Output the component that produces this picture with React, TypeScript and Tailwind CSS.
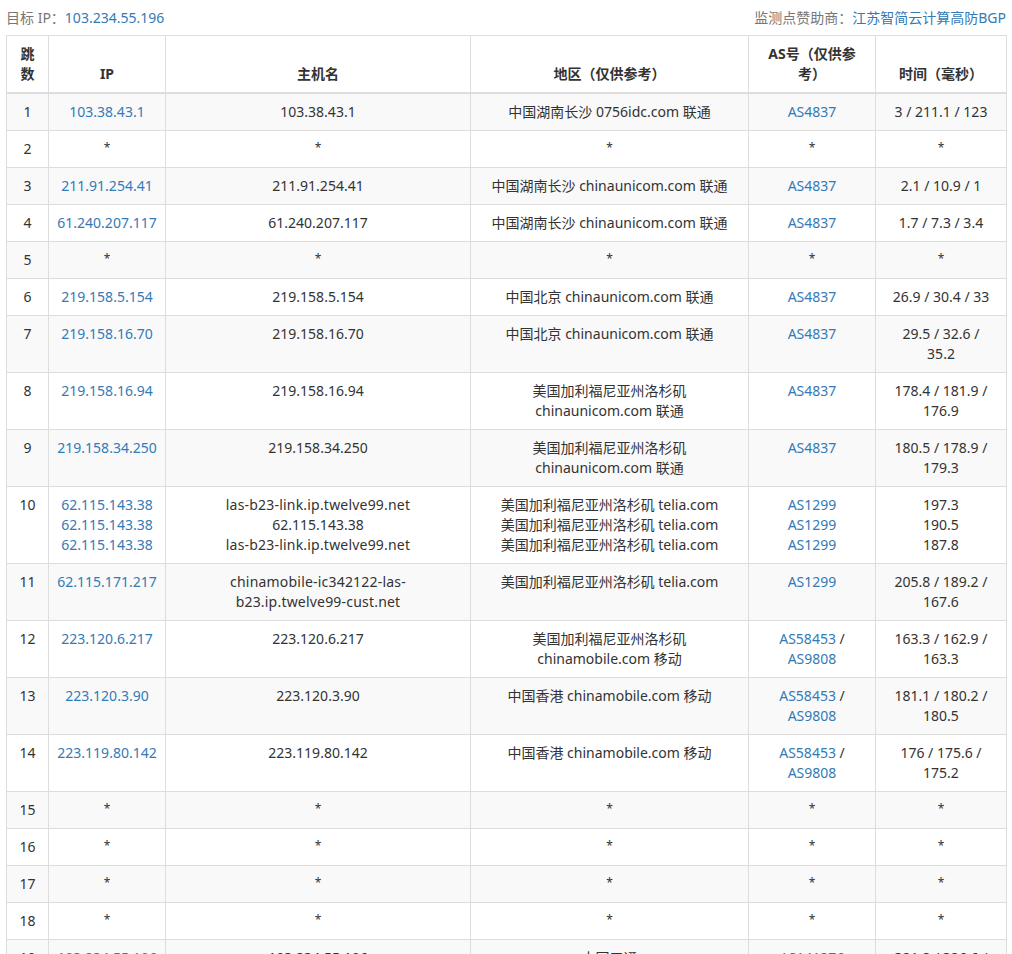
import React from "react";

type Hop = {
  n: number;
  ips: string[];
  hosts: string[];
  areas: string[];
  asLines: string[];
  times: string[];
};

const star = (n: number): Hop => ({ n, ips: ["*"], hosts: ["*"], areas: ["*"], asLines: ["*"], times: ["*"] });

const hops: Hop[] = [
  { n: 1, ips: ["103.38.43.1"], hosts: ["103.38.43.1"], areas: ["中国湖南长沙 0756idc.com 联通"], asLines: ["AS4837"], times: ["3 / 211.1 / 123"] },
  star(2),
  { n: 3, ips: ["211.91.254.41"], hosts: ["211.91.254.41"], areas: ["中国湖南长沙 chinaunicom.com 联通"], asLines: ["AS4837"], times: ["2.1 / 10.9 / 1"] },
  { n: 4, ips: ["61.240.207.117"], hosts: ["61.240.207.117"], areas: ["中国湖南长沙 chinaunicom.com 联通"], asLines: ["AS4837"], times: ["1.7 / 7.3 / 3.4"] },
  star(5),
  { n: 6, ips: ["219.158.5.154"], hosts: ["219.158.5.154"], areas: ["中国北京 chinaunicom.com 联通"], asLines: ["AS4837"], times: ["26.9 / 30.4 / 33"] },
  { n: 7, ips: ["219.158.16.70"], hosts: ["219.158.16.70"], areas: ["中国北京 chinaunicom.com 联通"], asLines: ["AS4837"], times: ["29.5 / 32.6 /", "35.2"] },
  { n: 8, ips: ["219.158.16.94"], hosts: ["219.158.16.94"], areas: ["美国加利福尼亚州洛杉矶", "chinaunicom.com 联通"], asLines: ["AS4837"], times: ["178.4 / 181.9 /", "176.9"] },
  { n: 9, ips: ["219.158.34.250"], hosts: ["219.158.34.250"], areas: ["美国加利福尼亚州洛杉矶", "chinaunicom.com 联通"], asLines: ["AS4837"], times: ["180.5 / 178.9 /", "179.3"] },
  {
    n: 10,
    ips: ["62.115.143.38", "62.115.143.38", "62.115.143.38"],
    hosts: ["las-b23-link.ip.twelve99.net", "62.115.143.38", "las-b23-link.ip.twelve99.net"],
    areas: ["美国加利福尼亚州洛杉矶 telia.com", "美国加利福尼亚州洛杉矶 telia.com", "美国加利福尼亚州洛杉矶 telia.com"],
    asLines: ["AS1299", "AS1299", "AS1299"],
    times: ["197.3", "190.5", "187.8"],
  },
  { n: 11, ips: ["62.115.171.217"], hosts: ["chinamobile-ic342122-las-", "b23.ip.twelve99-cust.net"], areas: ["美国加利福尼亚州洛杉矶 telia.com"], asLines: ["AS1299"], times: ["205.8 / 189.2 /", "167.6"] },
  { n: 12, ips: ["223.120.6.217"], hosts: ["223.120.6.217"], areas: ["美国加利福尼亚州洛杉矶", "chinamobile.com 移动"], asLines: ["AS58453 /", "AS9808"], times: ["163.3 / 162.9 /", "163.3"] },
  { n: 13, ips: ["223.120.3.90"], hosts: ["223.120.3.90"], areas: ["中国香港 chinamobile.com 移动"], asLines: ["AS58453 /", "AS9808"], times: ["181.1 / 180.2 /", "180.5"] },
  { n: 14, ips: ["223.119.80.142"], hosts: ["223.119.80.142"], areas: ["中国香港 chinamobile.com 移动"], asLines: ["AS58453 /", "AS9808"], times: ["176 / 175.6 /", "175.2"] },
  star(15),
  star(16),
  star(17),
  star(18),
  { n: 19, ips: ["103.234.55.196"], hosts: ["103.234.55.196"], areas: ["中国三通"], asLines: ["AS141376"], times: ["321.8 / 326.6 /", "322.1"] },
];

const thClass = "border border-[#dddddd] border-b-2 px-2 py-2 align-bottom text-center font-bold";
const tdClass = "border border-[#dddddd] px-2 py-2 align-top text-center";

// the * placeholder sits small and high in the reference
const Star = () => <div className="h-5 text-xs leading-[17px]">*</div>;

// "AS58453 /" keeps the slash outside the link
function AsLine({ text }: { text: string }) {
  if (text === "*") return <Star />;
  const [code, rest] = text.split(" ");
  return (
    <div>
      <a className="text-[#337ab7]">{code}</a>
      {rest ? ` ${rest}` : ""}
    </div>
  );
}

const Lines = ({ items, link, wide }: { items: string[]; link?: boolean; wide?: boolean }) => (
  <>
    {items.map((line, i) => {
      if (line === "*") return <Star key={i} />;
      if (link) {
        return (
          <div key={i}>
            <a className="text-[#337ab7]">{line}</a>
          </div>
        );
      }
      // host names with letters run a little wider than the digits do
      return (
        <div key={i} className={wide && /[a-z]/.test(line) ? "tracking-[0.2px]" : ""}>
          {line}
        </div>
      );
    })}
  </>
);

export default function App() {
  return (
    <div className="h-[954px] overflow-hidden bg-white px-1.5 font-['Noto_Sans','Noto_Sans_CJK_SC',sans-serif] text-[14px] leading-5 text-[#333333]">
      <div className="flex h-[35px] items-center justify-between text-[#777777]">
        <div>
          目标 IP：<a className="text-[#337ab7]">103.234.55.196</a>
        </div>
        <div>
          监测点赞助商：<a className="text-[#337ab7]">江苏智简云计算高防BGP</a>
        </div>
      </div>
      <table className="w-[1000px] table-fixed border-collapse">
        <colgroup>
          <col className="w-[42px]" />
          <col className="w-[117px]" />
          <col className="w-[305px]" />
          <col className="w-[278px]" />
          <col className="w-[127px]" />
          <col className="w-[131px]" />
        </colgroup>
        <thead>
          <tr>
            <th className={thClass}>跳数</th>
            <th className={thClass}>IP</th>
            <th className={thClass}>主机名</th>
            <th className={thClass}>地区（仅供参考）</th>
            <th className={thClass}>
              AS号（仅供参
              <br />
              考）
            </th>
            <th className={thClass}>时间（毫秒）</th>
          </tr>
        </thead>
        <tbody>
          {hops.map((hop) => (
            <tr key={hop.n} className="odd:bg-[#f9f9f9]">
              <td className={tdClass}>{hop.n}</td>
              <td className={tdClass}>
                <Lines items={hop.ips} link />
              </td>
              <td className={tdClass}>
                <Lines items={hop.hosts} wide />
              </td>
              <td className={tdClass}>
                <Lines items={hop.areas} />
              </td>
              <td className={tdClass}>
                {hop.asLines.map((line, i) => (
                  <AsLine key={i} text={line} />
                ))}
              </td>
              <td className={tdClass}>
                <Lines items={hop.times} />
              </td>
            </tr>
          ))}
        </tbody>
      </table>
    </div>
  );
}
